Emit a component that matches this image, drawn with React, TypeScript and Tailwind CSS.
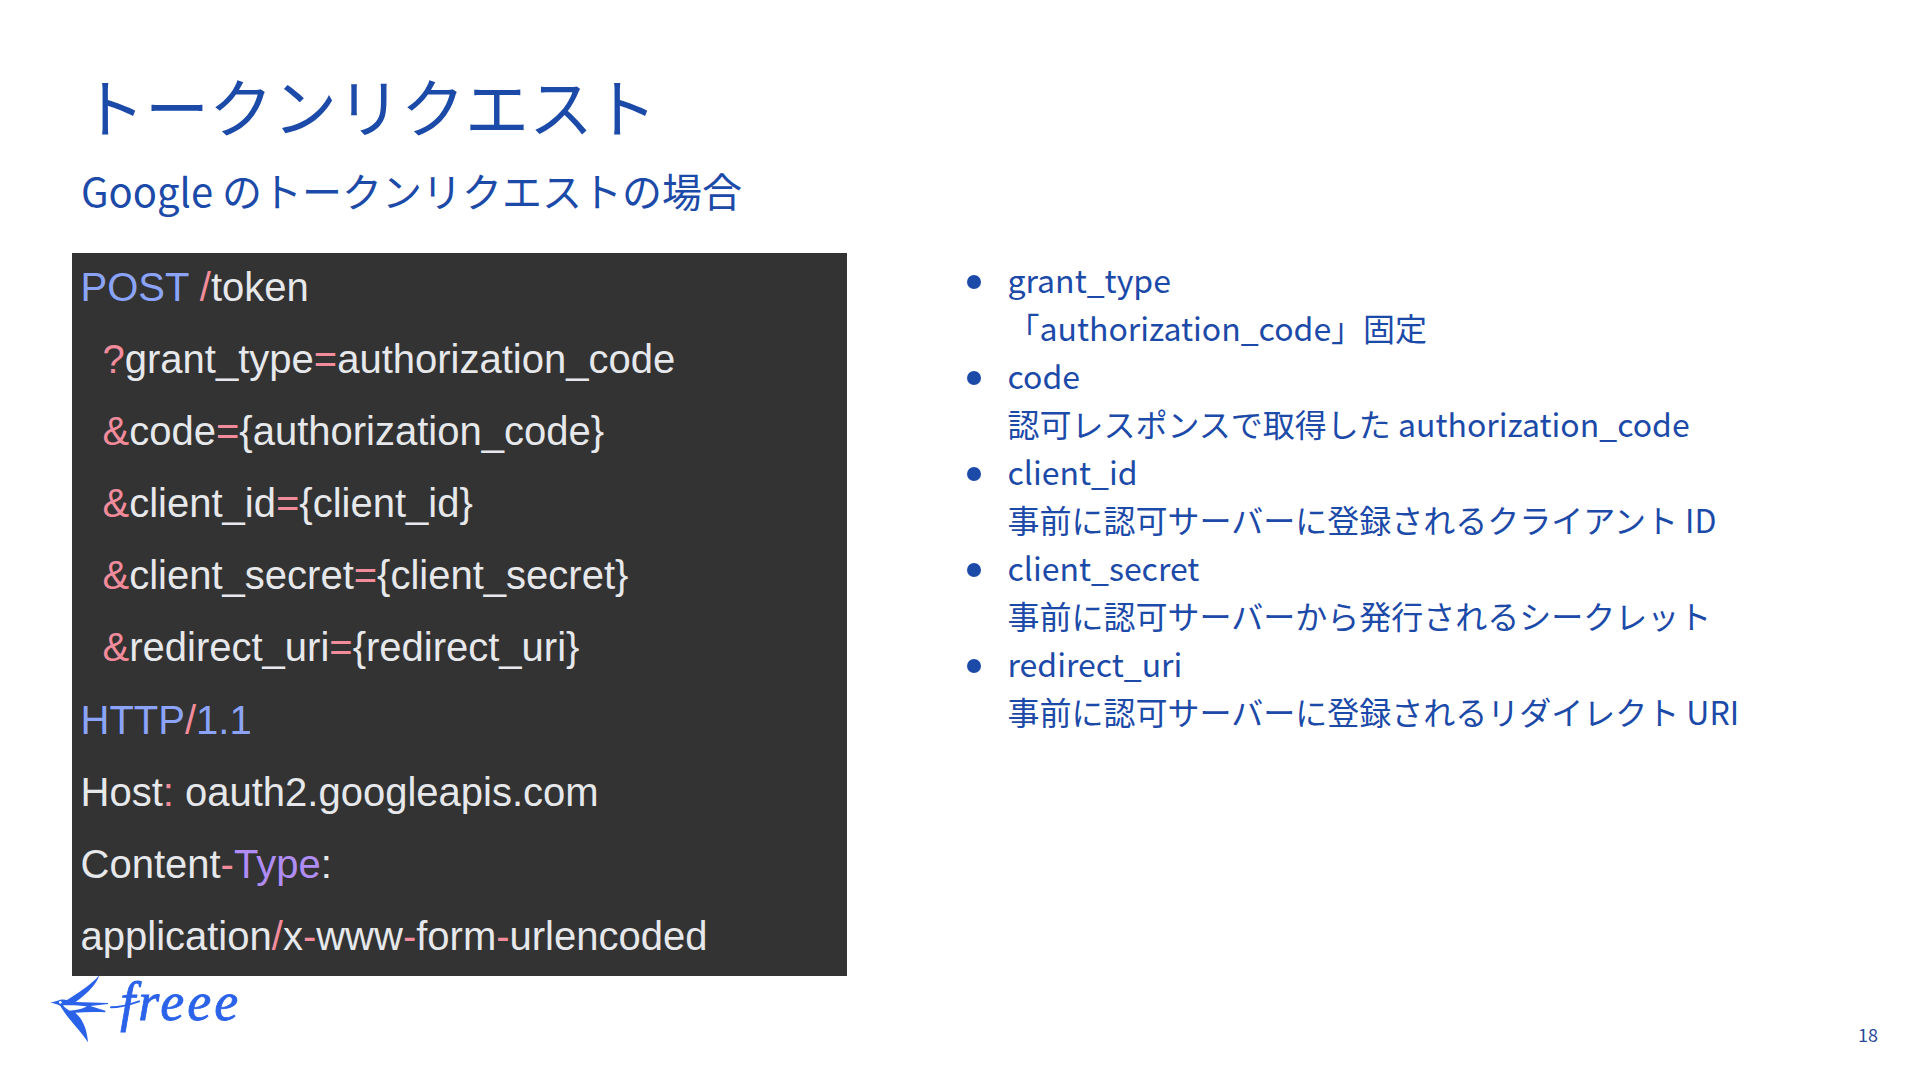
const jp = '"Noto Sans CJK JP", sans-serif';

function Bird() {
  return (
    <svg viewBox="20 0 280 225" className="w-[93.33px] h-[75px] shrink-0" aria-hidden="true">
      <path
        fill="#2a62ea"
        d="M30 98L52 92C62 87 72 88 80 90C112 70 148 48 178 15C168 42 145 68 106 96L203 99L203 102L150 108L195 122L195 127C165 125 135 126 105 128C125 145 140 175 143 217C115 175 85 150 60 108C52 102 42 100 30 98Z"
      />
      <path fill="#ffffff" d="M68 106C90 105 120 106 140 109C125 118 100 122 88 122C80 118 72 112 68 106Z" />
      <circle cx="60" cy="97" r="4" fill="#ffffff" />
      <path d="M212 112C240 112 262 106 296 94" fill="none" stroke="#2a62ea" strokeWidth="6" strokeLinecap="round" />
    </svg>
  );
}

function Tok({ c, children }: { c: 'blue' | 'pink' | 'purple'; children: string }) {
  const cls = c === 'blue' ? 'text-[#8ba4f9]' : c === 'pink' ? 'text-[#f28b9b]' : 'text-[#b08cf5]';
  return <span className={cls}>{children}</span>;
}

const params = [
  ['grant_type', '「authorization_code」固定'],
  ['code', '認可レスポンスで取得した authorization_code'],
  ['client_id', '事前に認可サーバーに登録されるクライアント ID'],
  ['client_secret', '事前に認可サーバーから発行されるシークレット'],
  ['redirect_uri', '事前に認可サーバーに登録されるリダイレクト URI'],
];

export default function App() {
  return (
    <div className="w-[1920px] h-[1080px] bg-white overflow-hidden flex flex-col text-[#1c4aa8]" style={{ fontFamily: jp }}>
      <header className="pl-[81px] pt-[54px]">
        <h1 className="text-[64px] leading-[100px]">トークンリクエスト</h1>
        <p className="text-[40px] leading-[58px] mt-[7px]">Google のトークンリクエストの場合</p>
      </header>

      <main className="flex pl-[72px] mt-[34px]">
        <div
          className="w-[775px] h-[723px] shrink-0 bg-[#333333] pl-[8.5px] text-[#e6e8eb] text-[40px] leading-[72.1px]"
          style={{ fontFamily: '"Liberation Sans", sans-serif' }}
        >
          <div className="-mt-[2px]">
            <div><Tok c="blue">POST</Tok> <Tok c="pink">/</Tok>token</div>
            <div className="pl-[22px]"><Tok c="pink">?</Tok>grant_type<Tok c="pink">=</Tok>authorization_code</div>
            <div className="pl-[22px]"><Tok c="pink">&amp;</Tok>code<Tok c="pink">=</Tok>{'{authorization_code}'}</div>
            <div className="pl-[22px]"><Tok c="pink">&amp;</Tok>client_id<Tok c="pink">=</Tok>{'{client_id}'}</div>
            <div className="pl-[22px]"><Tok c="pink">&amp;</Tok>client_secret<Tok c="pink">=</Tok>{'{client_secret}'}</div>
            <div className="pl-[22px]"><Tok c="pink">&amp;</Tok>redirect_uri<Tok c="pink">=</Tok>{'{redirect_uri}'}</div>
            <div><Tok c="blue">HTTP</Tok><Tok c="pink">/</Tok><Tok c="blue">1.1</Tok></div>
            <div>Host<Tok c="pink">:</Tok> oauth2.googleapis.com</div>
            <div>Content<Tok c="pink">-</Tok><Tok c="purple">Type</Tok>:</div>
            <div>application<Tok c="pink">/</Tok>x<Tok c="pink">-</Tok>www<Tok c="pink">-</Tok>form<Tok c="pink">-</Tok>urlencoded</div>
          </div>
        </div>

        <ul className="ml-[120px] pt-[2px] text-[32px] leading-[48px]">
          {params.map(([name, desc]) => (
            <li key={name} className="flex">
              <span className="w-[14px] h-[14px] rounded-full bg-[#1c4aa8] mt-[20px] mr-[26.5px] shrink-0" />
              <div>
                <div>{name}</div>
                <div className="whitespace-nowrap">{desc}</div>
              </div>
            </li>
          ))}
        </ul>
      </main>

      <footer className="flex justify-between items-start pl-[47px] pr-[42px]">
        <div className="flex items-start text-[#2a62ea] -mt-[6px]">
          <Bird />
          <span
            className="-ml-[20px] mt-[3px] text-[54px] leading-[58px] italic tracking-[3px] [-webkit-text-stroke:0.8px_#2a62ea]"
            style={{ fontFamily: '"Liberation Serif", serif' }}
          >
            freee
          </span>
        </div>
        <span className="text-[18px] leading-[24px] mt-[46px] text-[#2b4a9a]">18</span>
      </footer>
    </div>
  );
}
